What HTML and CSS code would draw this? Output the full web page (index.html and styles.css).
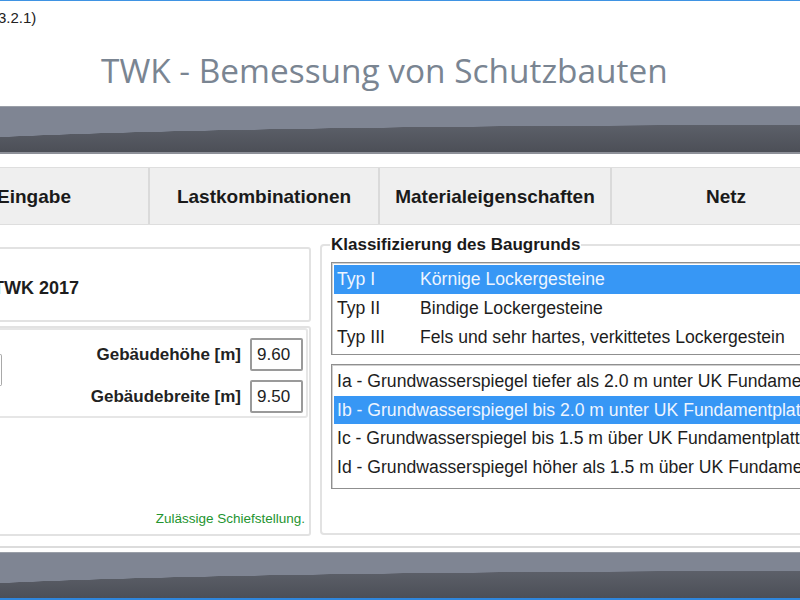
FILE: index.html
```html
<!DOCTYPE html>
<html lang="de">
<head>
<meta charset="utf-8">
<title>TWK - Bemessung von Schutzbauten</title>
<link rel="stylesheet" href="styles.css">
</head>
<body>
<div class="window">
  <div class="titlebar"><span class="apptitle">(3.2.1)</span></div>
  <header class="header"><h1 class="title">TWK - Bemessung von Schutzbauten</h1></header>
  <div class="band"></div>
  <nav class="tabs">
    <div class="tab">Eingabe</div>
    <div class="tab">Lastkombinationen</div>
    <div class="tab tab-wide">Materialeigenschaften</div>
    <div class="tab">Netz</div>
  </nav>
  <main class="main">
    <section class="leftcol">
      <div class="group group-norm"><span class="norm">TWK 2017</span></div>
      <div class="group group-geo">
        <div class="subgroup">
          <div class="combo"></div>
          <div class="fields">
            <div class="field"><span class="flabel">Gebäudehöhe [m]</span><div class="input">9.60</div></div>
            <div class="field"><span class="flabel">Gebäudebreite [m]</span><div class="input">9.50</div></div>
          </div>
        </div>
        <div class="status">Zulässige Schiefstellung.</div>
      </div>
    </section>
    <fieldset class="baugrund">
      <legend class="legend">Klassifizierung des Baugrunds</legend>
      <ul class="listbox list-typ">
        <li class="row selected"><span class="col1">Typ I</span><span>Körnige Lockergesteine</span></li>
        <li class="row"><span class="col1">Typ II</span><span>Bindige Lockergesteine</span></li>
        <li class="row"><span class="col1">Typ III</span><span>Fels und sehr hartes, verkittetes Lockergestein</span></li>
      </ul>
      <ul class="listbox list-gw">
        <li class="row row-gw">Ia - Grundwasserspiegel tiefer als 2.0 m unter UK Fundamentplatte</li>
        <li class="row row-gw selected">Ib - Grundwasserspiegel bis 2.0 m unter UK Fundamentplatte</li>
        <li class="row row-gw">Ic - Grundwasserspiegel bis 1.5 m über UK Fundamentplatte</li>
        <li class="row row-gw">Id - Grundwasserspiegel höher als 1.5 m über UK Fundamentplatte</li>
      </ul>
    </fieldset>
  </main>
  <div class="band band-bottom"></div>
</div>
</body>
</html>
```

FILE: styles.css
```css
* { box-sizing: border-box; }
html, body { margin: 0; padding: 0; }
body {
  width: 800px;
  height: 600px;
  overflow: hidden;
  background: #ffffff;
  font-family: "Liberation Sans", Arial, sans-serif;
  color: #1d1d1d;
}
.window {
  height: 600px;
  border-top: 1px solid #3f93e3;
  border-bottom: 2px solid #2f86dc;
  display: flex;
  flex-direction: column;
  overflow: hidden;
}
.titlebar {
  flex: none;
  height: 31px;
  line-height: 31px;
  padding-top: 1px;
  font-size: 15px;
  color: #222;
  white-space: nowrap;
}
.apptitle { margin-left: -7px; }
.header {
  flex: none;
  height: 74px;
  padding-top: 18px;
}
.title {
  margin: 0;
  padding-left: 101px;
  font-family: "Open Sans", "Noto Sans", sans-serif;
  font-weight: 400;
  font-size: 33.4px;
  line-height: 40px;
  color: #7a8592;
  white-space: nowrap;
}
.band {
  flex: none;
  height: 48px;
  border-top: 1px solid #9a9fa8;
  border-bottom: 2px solid #8d9098;
  background:
    radial-gradient(ellipse 900px 22px at 800px 40px, rgba(0,0,0,0) 99%, #7f8593 100%),
    linear-gradient(#676b75, #4c4f57);
}
.band-bottom {
  height: 46px;
  margin-top: 4px;
  border-bottom: none;
}
.tabs {
  flex: none;
  display: flex;
  margin-top: 13px;
  margin-left: -80px;
  height: 58px;
  background: #efefef;
  border-top: 1px solid #dedede;
  border-bottom: 1px solid #dedede;
}
.tab {
  flex: none;
  width: 230px;
  border-right: 2px solid #dadada;
  display: flex;
  align-items: center;
  justify-content: center;
  padding-top: 2px;
  font-weight: bold;
  font-size: 19px;
  color: #1a1a1a;
  white-space: nowrap;
}
.tab-wide { width: 232px; }
.main {
  flex: none;
  display: flex;
  height: 323px;
  padding-top: 10px;
  border-bottom: 2px solid #dcdcdc;
}
.leftcol {
  flex: none;
  width: 331px;
  margin-left: -20px;
  margin-top: 12px;
  display: flex;
  flex-direction: column;
  gap: 4px;
}
.group {
  border: 2px solid #e2e2e2;
  border-radius: 3px;
}
.group-norm {
  height: 75px;
  display: flex;
  align-items: center;
  padding-left: 11px;
  padding-top: 8px;
}
.norm {
  font-weight: bold;
  font-size: 18px;
}
.group-geo {
  height: 210px;
  display: flex;
  flex-direction: column;
}
.subgroup {
  height: 90px;
  margin-right: 1px;
  border: 2px solid #e6e6e6;
  border-radius: 3px;
  display: flex;
  padding-right: 3px;
}
.combo {
  flex: none;
  width: 18px;
  height: 32px;
  margin-top: 24px;
  border: 1px solid #a9a9a9;
  border-left: none;
  border-radius: 0 2px 2px 0;
}
.fields {
  flex: 1;
  display: flex;
  flex-direction: column;
  gap: 9px;
  padding-top: 8px;
}
.field {
  display: flex;
  justify-content: flex-end;
  align-items: center;
  gap: 9px;
}
.flabel {
  font-weight: bold;
  font-size: 17px;
  color: #222;
}
.input {
  width: 53px;
  height: 33px;
  border: 2px solid #9a9a9a;
  border-radius: 2px;
  padding-left: 5px;
  font-size: 17px;
  line-height: 29px;
  color: #222;
}
.status {
  margin-top: auto;
  padding: 0 4px 7px 0;
  text-align: right;
  font-size: 13.5px;
  line-height: 16px;
  color: #23942f;
}
.baugrund {
  flex: none;
  width: 620px;
  height: 300px;
  margin: 0 0 0 9px;
  padding: 0 0 0 9px;
  border: 2px solid #e2e2e2;
  border-radius: 4px;
}
.legend {
  padding: 0 1px;
  margin-left: -1px;
  font-weight: bold;
  font-size: 17px;
  line-height: 20px;
  color: #1a1a1a;
}
.listbox {
  list-style: none;
  margin: 0;
  width: 600px;
  border: 1px solid #8f8f8f;
  box-shadow: inset 1px 1px 0 #d0d0d0;
  padding: 2px 0 0 2px;
  font-size: 17.6px;
  color: #1d1d1d;
}
.list-typ {
  margin-top: 7px;
  height: 93px;
}
.list-gw {
  margin-top: 9px;
  height: 125px;
}
.row {
  display: flex;
  height: 29px;
  line-height: 29px;
  padding-left: 3px;
  white-space: nowrap;
}
.row-gw {
  height: 28.5px;
  line-height: 28.5px;
}
.col1 {
  flex: none;
  width: 83px;
}
.selected {
  background: #3797f5;
  color: #eef5ff;
}
```
